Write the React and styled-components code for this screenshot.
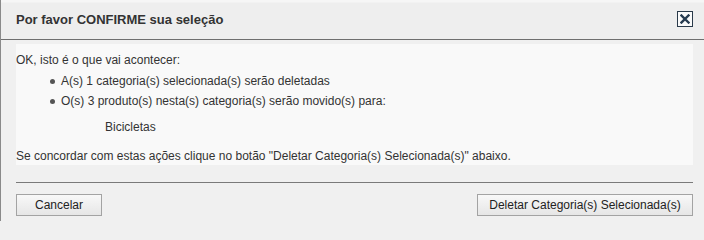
import React from "react";
import styled, { createGlobalStyle } from "styled-components";

const Global = createGlobalStyle`
  html, body { margin: 0; padding: 0; background: #f0f0f0; }
  body { font-family: "Liberation Sans", Tahoma, Arial, sans-serif; color: #333; }
  * { box-sizing: border-box; }
`;

const Dialog = styled.div`
  width: 704px;
  height: 221px;
  overflow: hidden;
  background: #f0f0f0;
  border-left: 1px solid #8a8a8a;
`;

const Header = styled.div`
  height: 40px;
  display: flex;
  align-items: center;
  justify-content: space-between;
  padding: 0 11px 0 15px;
  background: linear-gradient(#f6f6f6 0, #f6f6f6 2px, #eeeeee 3px, #eeeeee 100%);
  border-bottom: 1px solid #6e6e6e;
  box-shadow: -1px 0 0 #3a3a3a;
`;

const Title = styled.h1`
  margin: 0;
  font-size: 13px;
  font-weight: bold;
  color: #333;
`;

const Close = styled.button`
  width: 16px;
  height: 16px;
  padding: 0;
  border: 1px solid #2a3a4a;
  background: #fafafa;
  display: flex;
  align-items: center;
  justify-content: center;
  margin-top: -1px;
  cursor: pointer;
`;

const Body = styled.div`
  padding: 4px 11px 0 15px;
`;

const Content = styled.div`
  background: #f9f9f9;
  padding: 6px 0 0 0;
  font-size: 12px;
  color: #333;
`;

const Line = styled.p`
  margin: ${(p) => p.$mt || 0}px 0 0 ${(p) => p.$indent || 0}px;
  line-height: ${(p) => p.$lh || 20}px;
`;

const List = styled.ul`
  list-style: none;
  margin: 1px 0 0 0;
  padding: 0 0 0 45px;
`;

const Item = styled.li`
  position: relative;
  line-height: 20px;
  &::before {
    content: "";
    position: absolute;
    left: -11px;
    top: 8px;
    width: 5px;
    height: 5px;
    border-radius: 50%;
    background: #555;
  }
`;

const Separator = styled.hr`
  margin: 17px 0 0 0;
  border: 0;
  border-top: 1px solid #7a7a7a;
  height: 0;
`;

const Footer = styled.div`
  display: flex;
  justify-content: space-between;
  margin-top: 11px;
`;

const Button = styled.button`
  height: 22px;
  width: ${(p) => p.$w}px;
  padding: 0;
  font-family: "Liberation Sans", Tahoma, Arial, sans-serif;
  font-size: 12px;
  color: #222;
  border: 1px solid #a3a3a3;
  border-radius: 0;
  background: linear-gradient(#f8f8f8, #e6e6e6);
  cursor: pointer;
`;

export default function App() {
  return (
    <>
      <Global />
      <Dialog>
        <Header>
          <Title>Por favor CONFIRME sua seleção</Title>
          <Close aria-label="Fechar">
            <svg width="10" height="10" viewBox="0 0 10 10">
              <path d="M1.5 1.5 L8.5 8.5 M8.5 1.5 L1.5 8.5" stroke="#263b50" strokeWidth="2.4" strokeLinecap="square" />
            </svg>
          </Close>
        </Header>
        <Body>
          <Content>
            <Line>OK, isto é o que vai acontecer:</Line>
            <List>
              <Item>A(s) 1 categoria(s) selecionada(s) serão deletadas</Item>
              <Item>O(s) 3 produto(s) nesta(s) categoria(s) serão movido(s) para:</Item>
            </List>
            <Line $mt={6} $indent={89}>Bicicletas</Line>
            <Line $mt={10} $lh={18}>
              Se concordar com estas ações clique no botão "Deletar Categoria(s) Selecionada(s)" abaixo.
            </Line>
          </Content>
          <Separator />
          <Footer>
            <Button $w={86}>Cancelar</Button>
            <Button $w={216}>Deletar Categoria(s) Selecionada(s)</Button>
          </Footer>
        </Body>
      </Dialog>
    </>
  );
}
